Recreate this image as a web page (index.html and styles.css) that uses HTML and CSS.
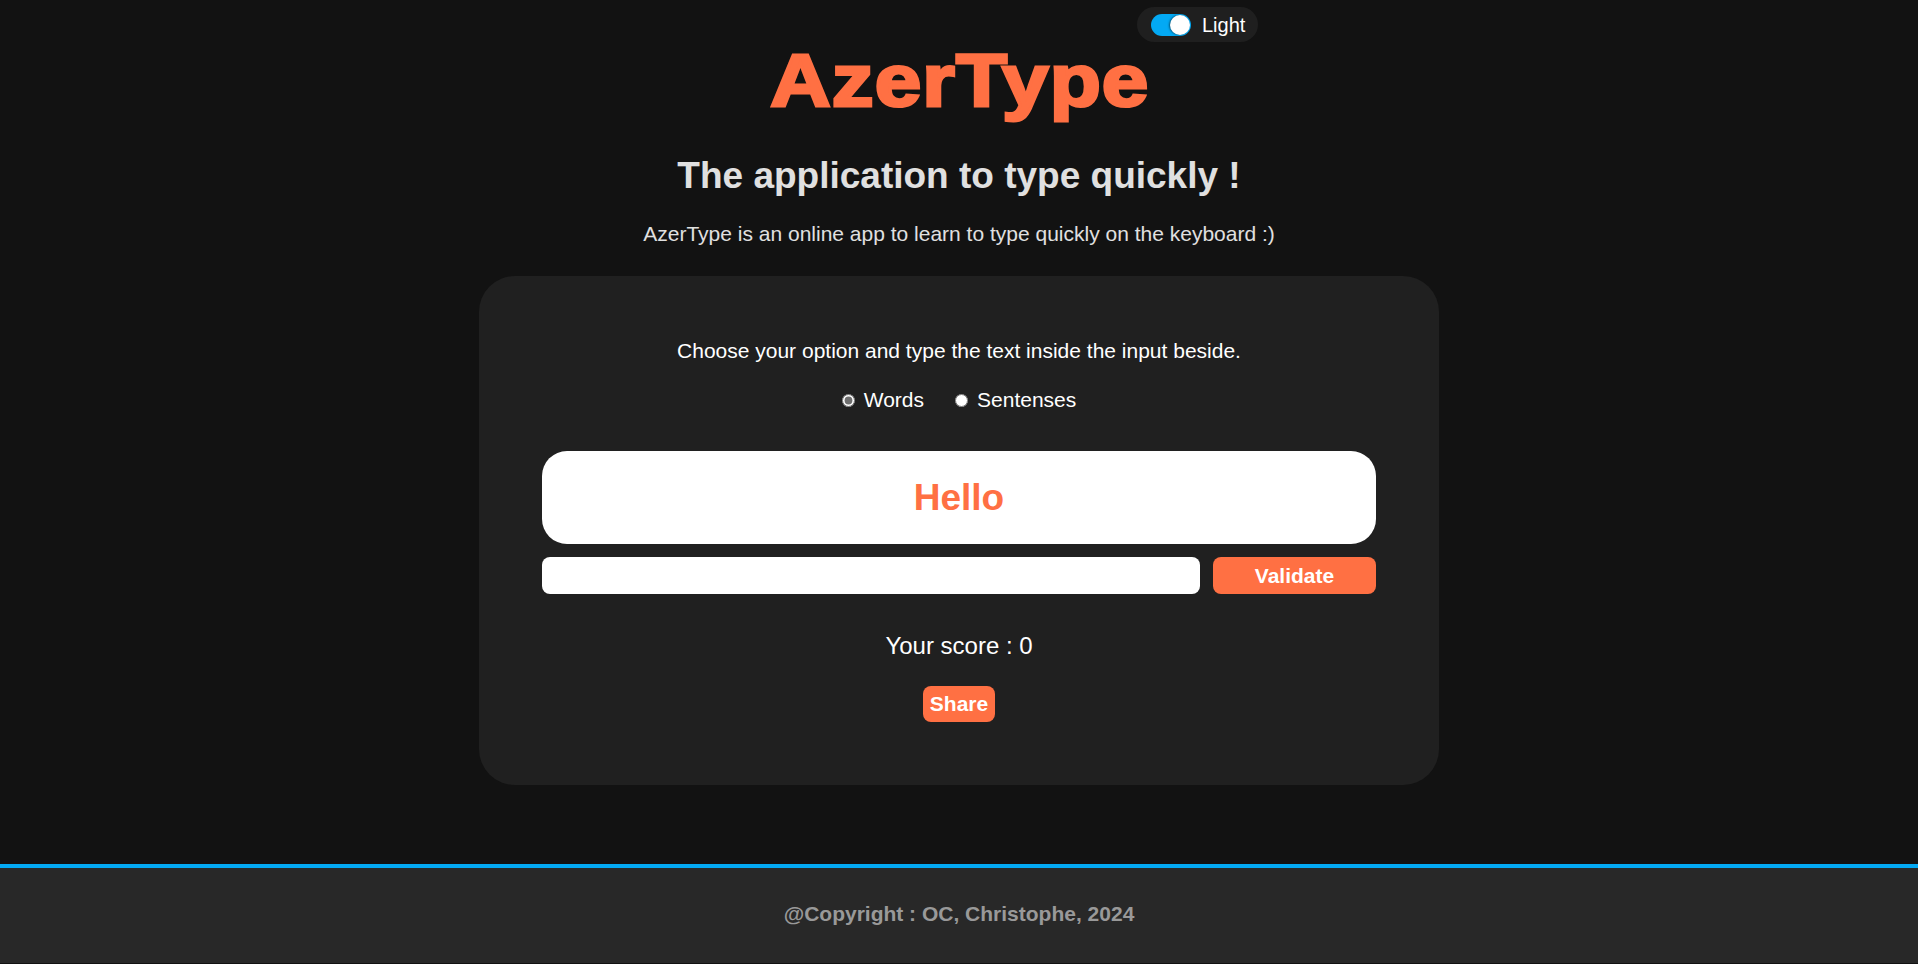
FILE: index.html
```html
<!DOCTYPE html>
<html lang="en">
<head>
  <meta charset="UTF-8">
  <meta name="viewport" content="width=device-width, initial-scale=1.0">
  <title>AzerType</title>
  <link rel="stylesheet" href="styles.css">
</head>
<body>
  <header class="site-header">
    <!-- Theme switch -->
    <label class="theme-switch">
      <input type="checkbox" id="theme-toggle" checked>
      <span class="switch-track"><span class="switch-knob"></span></span>
      <span class="switch-label">Light</span>
    </label>
    <h1>AzerType</h1>
    <h2>The application to type quickly !</h2>
    <p class="intro">AzerType is an online app to learn to type quickly on the keyboard :)</p>
  </header>

  <!-- Game zone -->
  <main class="game-card">
    <p class="instructions">Choose your option and type the text inside the input beside.</p>
    <div class="option-list">
      <label class="option"><input type="radio" name="option" value="words" checked> Words</label>
      <label class="option"><input type="radio" name="option" value="sentences"> Sentenses</label>
    </div>
    <div class="proposal-zone">Hello</div>
    <div class="typing-zone">
      <input type="text" id="user-input" aria-label="Type here">
      <button id="validate-btn" class="btn">Validate</button>
    </div>
    <p class="score">Your score : <span id="score-value">0</span></p>
    <button class="btn share-btn">Share</button>
  </main>

  <footer class="site-footer">
    <p>@Copyright : OC, Christophe, 2024</p>
  </footer>
</body>
</html>
```
FILE: styles.css
```css
body {
  font-family: "Liberation Sans", Arial, sans-serif;
  background-color: #121212;
  color: #ffffff;
  margin: 0;
  padding: 0;
}

.site-header {
  text-align: center;
}

/* Theme switch */
.theme-switch {
  position: absolute;
  top: 7px;
  left: calc(50% + 178px);
  display: inline-flex;
  align-items: center;
  gap: 11px;
  height: 35px;
  padding: 0 13px 0 14px;
  background-color: #1f1f1f;
  border-radius: 18px;
  cursor: pointer;
}

.theme-switch input {
  display: none;
}

.switch-track {
  position: relative;
  width: 40px;
  height: 22px;
  border-radius: 11px;
  background-color: #666;
}

.theme-switch input:checked + .switch-track {
  background-color: #03a9f4;
}

.switch-knob {
  position: absolute;
  top: 1px;
  left: 1px;
  width: 20px;
  height: 20px;
  border-radius: 50%;
  background-color: #fff;
  box-shadow: -1px 0 2px rgba(0, 0, 0, 0.5);
}

.theme-switch input:checked + .switch-track .switch-knob {
  left: 19px;
}

.switch-label {
  font-size: 20px;
  line-height: 24px;
  color: #fff;
}

h1 {
  width: fit-content;
  margin: 41px auto 0;
  padding-left: 1px;
  font-size: 74px;
  line-height: 80px;
  font-weight: bold;
  letter-spacing: 1px;
  color: #ff7043;
  -webkit-text-stroke: 3px #ff7043;
  transform: scaleX(1.13);
}

h2 {
  margin: 33px 0 0;
  font-size: 37px;
  line-height: 44px;
  color: #e0e0e0;
}

.intro {
  margin: 24px 0 0;
  font-size: 21px;
  line-height: 24px;
  color: #e0e0e0;
}

/* Game card */
.game-card {
  box-sizing: border-box;
  width: 960px;
  margin: 30px auto 0;
  padding: 63px;
  background-color: #202020;
  border-radius: 36px;
  text-align: center;
}

.instructions {
  margin: 0;
  font-size: 21px;
  line-height: 24px;
}

.option-list {
  display: flex;
  justify-content: center;
  gap: 31px;
  margin-top: 25px;
  font-size: 21px;
  line-height: 24px;
}

.option {
  display: flex;
  align-items: center;
  gap: 9px;
}

.option input {
  margin: 0;
  width: 13px;
  height: 13px;
  accent-color: #6e6e6e;
}

.proposal-zone {
  display: flex;
  align-items: center;
  justify-content: center;
  height: 93px;
  margin-top: 39px;
  background-color: #fff;
  border-radius: 25px;
  color: #ff7043;
  font-size: 37px;
  line-height: 44px;
  font-weight: bold;
}

.typing-zone {
  display: flex;
  gap: 13px;
  height: 37px;
  margin-top: 13px;
}

.typing-zone input {
  flex: 1;
  border: none;
  border-radius: 8px;
  background-color: #fff;
  font-family: inherit;
  font-size: 20px;
  padding: 0 10px;
}

.btn {
  border: none;
  border-radius: 8px;
  background-color: #ff7043;
  color: #fff;
  font-family: inherit;
  font-size: 21px;
  font-weight: bold;
  cursor: pointer;
}

#validate-btn {
  width: 163px;
}

.score {
  margin: 38px 0 0;
  font-size: 24px;
  line-height: 28px;
}

.share-btn {
  display: block;
  height: 36px;
  margin: 26px auto 0;
  padding: 0 7px;
  line-height: 36px;
}

/* Footer */
.site-footer {
  margin-top: 79px;
  background-color: #282828;
  border-top: 4px solid #03a9f4;
  padding: 34px 0 37px;
  text-align: center;
}

.site-footer p {
  margin: 0;
  font-size: 21px;
  line-height: 24px;
  font-weight: bold;
  color: #999;
}
```
